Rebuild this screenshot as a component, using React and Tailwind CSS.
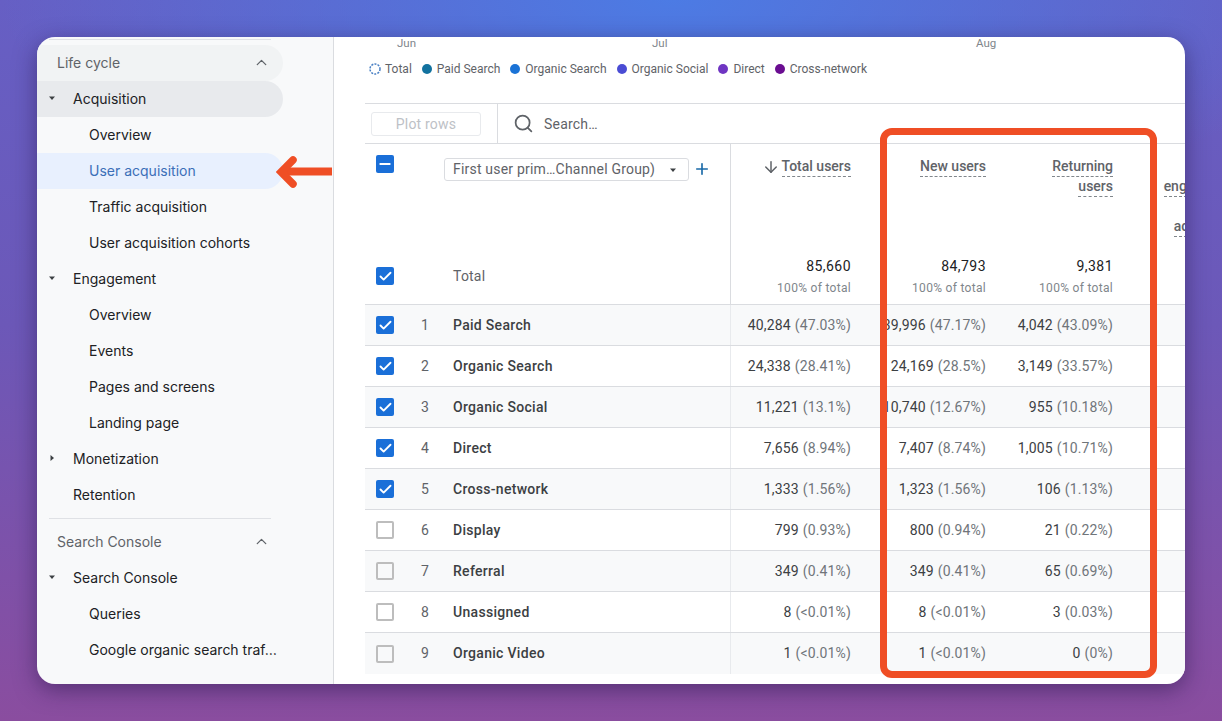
import React from "react";
import { Check, Minus, Search, ArrowDown, Plus, ChevronUp } from "lucide-react";

const Caret = ({ right }) => (
  <svg width="10" height="10" viewBox="0 0 10 10" className="shrink-0 text-[#3c4043]">
    {right ? <path d="M3.5 2 7 5 3.5 8z" fill="currentColor" /> : <path d="M2 3.5h6L5 7z" fill="currentColor" />}
  </svg>
);

const SectionHead = ({ label, pill }) => (
  <div className={`h-9 w-[246px] shrink-0 flex items-center justify-between pl-5 pr-[13px] pb-[2px] rounded-r-[18px] text-[#5f6368] ${pill ? "bg-[#f1f3f4]" : ""}`}>
    <span>{label}</span>
    <ChevronUp size={17} strokeWidth={1.8} className="text-[#5f6368]" />
  </div>
);

const Group = ({ label, caret, active }) => (
  <div className={`h-9 w-[246px] shrink-0 flex items-center pb-[2px] rounded-r-[18px] text-[#202124] ${active ? "bg-[#e8eaed]" : ""}`}>
    <span className="w-9 flex justify-start pl-[10px]">{caret === "none" ? null : <Caret right={caret === "right"} />}</span>
    <span>{label}</span>
  </div>
);

const Item = ({ label, active }) => (
  <div className={`h-9 w-[246px] shrink-0 flex items-center pl-[52px] pb-[2px] rounded-r-[18px] whitespace-nowrap ${active ? "bg-[#e8f0fe] text-[#3b6fb8]" : "text-[#202124]"}`}>
    {label}
  </div>
);

const Sidebar = () => (
  <aside className="w-[297px] h-full shrink-0 bg-[#f8f9fa] border-r border-[#dadce0] font-['Inter',sans-serif] text-[14px] flex flex-col">
    <div className="h-px w-[222px] ml-3 mt-[2px] mb-[5px] bg-[#dfe1e5]" />
    <SectionHead label="Life cycle" pill />
    <Group label="Acquisition" active />
    <Item label="Overview" />
    <Item label="User acquisition" active />
    <Item label="Traffic acquisition" />
    <Item label="User acquisition cohorts" />
    <Group label="Engagement" />
    <Item label="Overview" />
    <Item label="Events" />
    <Item label="Pages and screens" />
    <Item label="Landing page" />
    <Group label="Monetization" caret="right" />
    <Group label="Retention" caret="none" />
    <div className="h-px w-[222px] ml-3 mt-[5px] mb-[5px] bg-[#dfe1e5]" />
    <SectionHead label="Search Console" />
    <Group label="Search Console" />
    <Item label="Queries" />
    <Item label="Google organic search traf…" />
  </aside>
);

const legend = [
  ["Paid Search", "bg-[#12729f]"],
  ["Organic Search", "bg-[#1a73d6]"],
  ["Organic Social", "bg-[#4a4cd4]"],
  ["Direct", "bg-[#6f35c2]"],
  ["Cross-network", "bg-[#6a0d91]"],
];

const Legend = () => (
  <div className="flex items-center ml-[35px] mt-[13px] h-[14px] text-[12px] text-[#5f6368] gap-[10px]">
    <div className="flex items-center gap-1">
      <svg width="12" height="12" viewBox="0 0 12 12">
        <circle cx="6" cy="6" r="5" fill="none" stroke="#4a80c4" strokeWidth="1.5" strokeDasharray="2 1.2" />
      </svg>
      <span>Total</span>
    </div>
    {legend.map(([name, color]) => (
      <div key={name} className="flex items-center gap-[5px]">
        <span className={`w-[10px] h-[10px] rounded-full ${color}`} />
        <span>{name}</span>
      </div>
    ))}
  </div>
);

const Box = ({ state }) => {
  if (state === "off") return <span className="w-[18px] h-[18px] shrink-0 rounded-[2px] border-2 border-[#bdbdbd] block" />;
  return (
    <span className="w-[18px] h-[18px] shrink-0 rounded-[2px] bg-[#1a6fd8] flex items-center justify-center text-white">
      {state === "minus" ? <Minus size={16} strokeWidth={3} /> : <Check size={15} strokeWidth={3} />}
    </span>
  );
};

const Dashed = ({ children }) => (
  <span className="inline-block leading-[17px] h-[19px] border-b border-dashed border-[#80868b]">{children}</span>
);

const HeadLabel = ({ lines, icon, w }) => (
  <div className={`${w} pr-[15px] shrink-0 pt-[13px] flex flex-col items-end text-[14px] font-medium text-[#5f6368] whitespace-nowrap`}>
    {lines.map((l, i) => (
      <div key={i} className="flex items-center h-[20px]">
        {icon && i === 0 ? <ArrowDown size={18} strokeWidth={2} className="mr-[2px] text-[#5f6368]" /> : null}
        {l ? <Dashed>{l}</Dashed> : null}
      </div>
    ))}
  </div>
);

const TotalCell = ({ v, w }) => (
  <div className={`${w} pr-[15px] pb-[2px] shrink-0 flex flex-col items-end justify-center`}>
    <span className="text-[14px] text-[#202124] tracking-[0.45px] leading-5">{v}</span>
    <span className="text-[12px] text-[#80868b] tracking-[0.3px] leading-5 mt-[2px]">100% of total</span>
  </div>
);

const Metric = ({ v, p, w }) => (
  <div className={`${w} pr-[15px] shrink-0 flex items-center justify-end whitespace-nowrap text-[14px] tracking-[0.15px] text-[#3c4043]`}>
    <span>{v}</span>
    <span className="ml-1 text-[#70757a]">({p})</span>
  </div>
);

const rows = [
  ["Paid Search", "40,284", "47.03%", "39,996", "47.17%", "4,042", "43.09%", "on"],
  ["Organic Search", "24,338", "28.41%", "24,169", "28.5%", "3,149", "33.57%", "on"],
  ["Organic Social", "11,221", "13.1%", "10,740", "12.67%", "955", "10.18%", "on"],
  ["Direct", "7,656", "8.94%", "7,407", "8.74%", "1,005", "10.71%", "on"],
  ["Cross-network", "1,333", "1.56%", "1,323", "1.56%", "106", "1.13%", "on"],
  ["Display", "799", "0.93%", "800", "0.94%", "21", "0.22%", "off"],
  ["Referral", "349", "0.41%", "349", "0.41%", "65", "0.69%", "off"],
  ["Unassigned", "8", "<0.01%", "8", "<0.01%", "3", "0.03%", "off"],
  ["Organic Video", "1", "<0.01%", "1", "<0.01%", "0", "0%", "off"],
];

const C1 = "w-[135px]";
const C2 = "w-[135px]";
const C3 = "w-[127px]";

const Table = () => (
  <div className="ml-[31px] mt-[27px] w-[820px] font-['Roboto',sans-serif]">
    <div className="h-[39px] border-y border-[#dadce0] flex items-stretch box-content -mb-px">
      <div className="w-[133px] shrink-0 border-r border-[#dadce0] flex items-center pl-[6px]">
        <div className="w-[110px] h-6 pt-px border border-[#e8eaed] rounded-[3px] flex items-center justify-center text-[14px] text-[#bdc1c6] tracking-[0.2px]">Plot rows</div>
      </div>
      <div className="flex items-center pl-[15px] text-[14px] text-[#5f6368] tracking-[0.2px]">
        <Search size={21} strokeWidth={2} className="text-[#5f6368]" />
        <span className="ml-[10px] pt-px">Search…</span>
      </div>
    </div>

    <div className="flex h-[109px] border-t border-[#dadce0]">
      <div className="w-[366px] shrink-0 border-r border-[#dadce0] pl-[11px] flex items-start">
        <div className="mt-[11px]"><Box state="minus" /></div>
        <div className="ml-[50px] mt-[14px] w-[245px] h-[23px] border border-[#dadce0] rounded-[3px] flex items-center justify-between pl-2 pr-[10px] text-[14px] text-[#5f6368] tracking-[0.2px] whitespace-nowrap">
          <span>First user prim…Channel Group)</span>
          <Caret />
        </div>
        <Plus size={18} strokeWidth={2.2} className="ml-1 mt-4 text-[#1a6aa8]" />
      </div>
      <HeadLabel lines={["Total users"]} icon w={C1} />
      <HeadLabel lines={["New users"]} w={C2} />
      <HeadLabel lines={["Returning", "users"]} w={C3} />
      <HeadLabel lines={["", "engagement", "", "active user"]} w="w-[129px]" />
    </div>

    <div className="flex h-[52px] border-b border-[#dadce0] box-content">
      <div className="w-[366px] shrink-0 border-r border-[#dadce0] pl-[11px] pb-1 flex items-center text-[14px] text-[#5f6368]">
        <Box state="on" />
        <span className="ml-[59px] tracking-[0.2px]">Total</span>
      </div>
      <TotalCell v="85,660" w={C1} />
      <TotalCell v="84,793" w={C2} />
      <TotalCell v="9,381" w={C3} />
    </div>

    {rows.map((r, i) => (
      <div key={r[0]} className={`flex h-[41px] ${i < 8 ? "border-b border-[#dadce0]" : ""} ${i % 2 === 0 ? "bg-[#f8f9fa]" : "bg-white"}`}>
        <div className="w-[366px] shrink-0 border-r border-[#e8eaed] pl-[11px] flex items-center text-[14px]">
          <Box state={r[7]} />
          <span className="w-[59px] pl-[27px] text-[#5f6368]">{i + 1}</span>
          <span className="font-medium text-[#3c4043] tracking-[0.3px]">{r[0]}</span>
        </div>
        <Metric v={r[1]} p={r[2]} w={C1} />
        <Metric v={r[3]} p={r[4]} w={C2} />
        <Metric v={r[5]} p={r[6]} w={C3} />
      </div>
    ))}
  </div>
);

const Main = () => (
  <main className="flex-1 min-w-0 h-full bg-white overflow-hidden">
    <div className="flex pl-[63px] h-[12px] text-[11.5px] leading-[12px] text-[#80868b] font-['Roboto',sans-serif]">
      <span className="w-[255px] shrink-0">Jun</span>
      <span className="w-[324px] shrink-0">Jul</span>
      <span>Aug</span>
    </div>
    <div className="font-['Roboto',sans-serif]"><Legend /></div>
    <Table />
  </main>
);

export default function App() {
  return (
    <div className="relative w-[1222px] h-[721px] overflow-hidden pt-[37px] pl-[37px] bg-[radial-gradient(ellipse_55%_32%_at_55%_0%,#4c7be4_0%,rgba(76,123,228,0)_100%),linear-gradient(180deg,#665fc4_0%,#6c58b8_45%,#8a4d9f_100%)]">
      <div className="w-[1148px] h-[647px] flex rounded-[18px] overflow-hidden shadow-[0_6px_22px_rgba(35,20,70,0.5)]">
        <Sidebar />
        <Main />
      </div>
      <div className="absolute left-[880px] top-[128px] w-[277px] h-[550px] border-[7px] border-[#ef4e25] rounded-[12px]" />
      <svg className="absolute left-[276px] top-[155px]" width="57" height="34" viewBox="0 0 57 34">
        <path d="M56 16.5H8" stroke="#ef4e25" strokeWidth="8" fill="none" />
        <path d="M17 5 5 17 17 29" stroke="#ef4e25" strokeWidth="7.5" strokeLinecap="round" fill="none" />
      </svg>
    </div>
  );
}
